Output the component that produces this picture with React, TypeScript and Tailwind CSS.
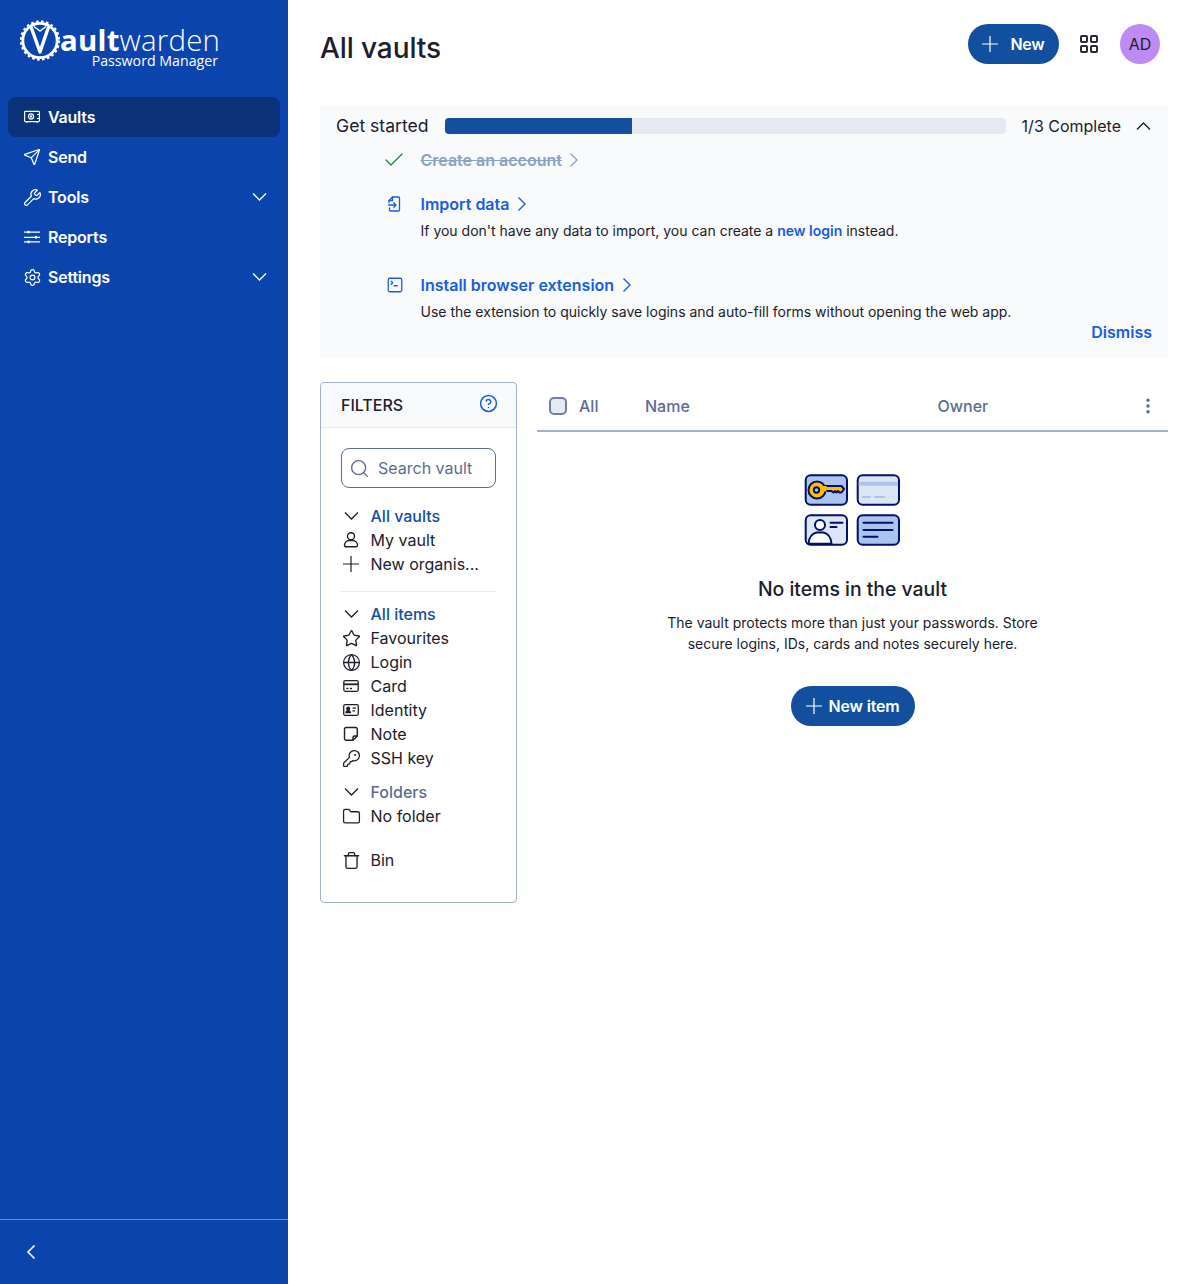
import React from 'react';
import {
  Check,
  CircleHelp,
  EllipsisVertical,
  Folder,
  Globe,
  KeyRound,
  Search,
  Send,
  Settings,
  SquareTerminal,
  Star,
  Trash,
  Wrench,
} from 'lucide-react';

const VaultIcon = () => (
  <svg width="16" height="16" viewBox="0 0 16 16" fill="none" stroke="white" strokeWidth="1.2">
    <rect x="0.6" y="2.4" width="14.8" height="10.2" rx="0.8" />
    <path d="M3 12.6v1.4M13 12.6v1.4M13 5.500h2.500M13 9.500h2.500" />
    <circle cx="7" cy="7.500" r="2.600" />
    <circle cx="7" cy="7.500" r="0.7" fill="white" />
  </svg>
);

const SlidersIcon = () => (
  <svg width="16" height="16" viewBox="0 0 16 16" fill="none" stroke="white" strokeWidth="1.3">
    <path d="M0 3.200h16M0 8.300h16M0 12.900h16" />
    <circle cx="4.500" cy="3.200" r="1.400" fill="white" stroke="none" />
    <circle cx="12" cy="8.300" r="1.400" fill="white" stroke="none" />
    <circle cx="4.500" cy="12.900" r="1.400" fill="white" stroke="none" />
  </svg>
);

const ImportIcon = () => (
  <svg width="16" height="16" viewBox="0 0 16 16" fill="none" stroke="currentColor" strokeWidth="1.3" strokeLinejoin="round" strokeLinecap="round">
    <path d="M3 6.500V4.500L6.500 1h6a1 1 0 0 1 1 1v12a1 1 0 0 1-1 1h-8a1 1 0 0 1-1-1v-2" />
    <path d="M6.500 1v3.500H3" />
    <path d="M2.500 9H10M7.800 6.800 10 9l-2.200 2.200" />
  </svg>
);

const UserIcon = () => (
  <svg width="16" height="16" viewBox="0 0 16 16" fill="none" stroke="currentColor" strokeWidth="1.4">
    <circle cx="8" cy="4.300" r="3.500" />
    <path d="M1.500 13.200c0-2.600 2.200-4.700 4.500-4.700h4c2.300 0 4.500 2.100 4.500 4.700 0 1.100-.6 1.600-1.500 1.600H3c-.9 0-1.500-.5-1.500-1.600z" />
  </svg>
);

const CardIcon = () => (
  <svg width="16" height="16" viewBox="0 0 16 16" fill="none" stroke="currentColor" strokeWidth="1.3">
    <rect x="0.8" y="2.700" width="14.400" height="10.600" rx="1.500" />
    <path d="M1 6.300h14" strokeWidth="1.800" />
    <path d="M3.500 10.500h2M7 10.500h2" />
  </svg>
);

const IdentityIcon = () => (
  <svg width="16" height="16" viewBox="0 0 16 16" fill="none" stroke="currentColor" strokeWidth="1.3">
    <rect x="0.7" y="2.700" width="14.600" height="10.600" rx="1.500" />
    <circle cx="5.200" cy="6.600" r="1.400" fill="currentColor" />
    <path d="M3 10.600c.2-2.600 4.200-2.600 4.400 0z" fill="currentColor" />
    <path d="M9.500 6.200h3.500M9.500 8.800h2.500" />
  </svg>
);

const NoteIcon = () => (
  <svg width="16" height="16" viewBox="0 0 16 16" fill="none" stroke="currentColor" strokeWidth="1.4" strokeLinejoin="round">
    <path d="M10 14.300H3a1.500 1.500 0 0 1-1.500-1.500V3A1.500 1.500 0 0 1 3 1.500h9.800A1.500 1.500 0 0 1 14.300 3v7z" />
    <path d="M14.300 10h-2.800A1.500 1.500 0 0 0 10 11.500v2.800" />
  </svg>
);

const AppsIcon = () => (
  <svg width="18" height="18" viewBox="0 0 18 18" fill="none" stroke="#272b33" strokeWidth="2">
    <rect x="1" y="1" width="6" height="6" rx="1" />
    <rect x="11" y="1" width="6" height="6" rx="1" />
    <rect x="1" y="11" width="6" height="6" rx="1" />
    <rect x="11" y="11" width="6" height="6" rx="1" />
  </svg>
);

const PlusIcon = ({ size }: { size: number }) => (
  <svg width={size} height={size} viewBox="0 0 16 16" fill="none" stroke="currentColor" strokeWidth="1.200" className="shrink-0">
    <path d="M8 0v16M0 8h16" />
  </svg>
);

const ChevronDownIcon = ({ className }: { className?: string }) => (
  <svg width="17" height="10" viewBox="0 0 17 10" fill="none" stroke="currentColor" strokeWidth="1.300" className={className}>
    <path d="M2 1.500 8.500 8 15 1.500" />
  </svg>
);

const ChevronUpIcon = () => (
  <svg width="17" height="10" viewBox="0 0 17 10" fill="none" stroke="currentColor" strokeWidth="1.400">
    <path d="M2 8.500 8.500 2 15 8.500" />
  </svg>
);

const ChevronRightIcon = ({ className }: { className?: string }) => (
  <svg width="10" height="16" viewBox="0 0 10 16" fill="none" stroke="currentColor" strokeWidth="1.400" className={className}>
    <path d="M1.500 1.500 8 8l-6.500 6.500" />
  </svg>
);

const Logo = () => (
  <div className="flex h-[97px] pl-[20px] pt-[20px] text-white font-['Open_Sans',sans-serif]">
    <svg width="40" height="42" viewBox="0 0 40 42" fill="none" stroke="white" className="shrink-0">
      <circle cx="20" cy="20.500" r="17.200" strokeWidth="2.800" />
      <circle cx="20" cy="20.500" r="19" strokeWidth="2.400" strokeDasharray="2.600 2.400" />
      <path d="M10.500 5.500 20 32 29 5.500" strokeWidth="3.400" strokeLinejoin="round" />
      <path d="M14 6.500 20 11l6-4.500" strokeWidth="1.400" />
    </svg>
    <div className="w-[160px] shrink-0">
      <div className="mt-[6px] text-[29.400px] leading-[28px] tracking-[0.2px] whitespace-nowrap">
        <span className="inline-block font-bold">ault</span>
        <span className="inline-block font-light">warden</span>
      </div>
      <div className="pr-[2px] text-right text-[14.200px] leading-[14px] whitespace-nowrap">Password Manager</div>
    </div>
  </div>
);

const NavItem = ({ icon, label, active, chevron }: { icon: React.ReactNode; label: string; active?: boolean; chevron?: boolean }) => (
  <div className={`flex h-10 items-center rounded-lg pl-4 pr-[12px] ${active ? 'bg-[#0b3179]' : ''}`}>
    <span className="flex w-6 shrink-0">{icon}</span>
    <span className="flex-1 text-base font-semibold tracking-[-0.2px] text-white">{label}</span>
    {chevron && <ChevronDownIcon className="text-white" />}
  </div>
);

const FilterRow = ({ icon, label, heading, muted }: { icon: React.ReactNode; label: string; heading?: boolean; muted?: boolean }) => (
  <div className="flex h-6 items-center">
    <span className="ml-[2px] flex w-[27.500px] shrink-0 text-[#1b2029]">{icon}</span>
    <span className={`text-base ${muted ? 'font-medium text-[#5a6d91]' : heading ? 'font-medium text-[#12509f]' : 'text-[#1b2029]'}`}>{label}</span>
  </div>
);

const Illustration = () => (
  <svg width="98" height="74" viewBox="0 0 98 74" fill="none" stroke="#020f66" strokeWidth="2" strokeLinecap="round">
    <rect x="1.700" y="2.300" width="41.300" height="29.400" rx="5" fill="#aac3ef" />
    <rect x="53.700" y="2.300" width="41.300" height="29.400" rx="5" fill="#dbe5f6" />
    <path d="M54.700 10.700h39.300" stroke="#aac3ef" strokeWidth="4" strokeLinecap="butt" />
    <path d="M59 24h7M71 24h9" stroke="#aac3ef" />
    <rect x="1.700" y="42.300" width="41.300" height="29.400" rx="5" fill="#dbe5f6" />
    <path d="M4.500 70.700c.5-7 4.500-10.500 8-11.200h7c3.500.7 7.500 4.200 8 11.200z" fill="white" stroke="#020f66" />
    <circle cx="16" cy="52" r="5" fill="white" />
    <path d="M26.500 49.700h12M26.500 54h6" />
    <rect x="53.700" y="42.300" width="41.300" height="29.400" rx="5" fill="#aac3ef" />
    <path d="M59.500 49.700h29M59.500 57h29M59.500 63.700h14" />
    <path
      d="M18 13h19.500l2.500 3-2.500 3.500h-2l-1.500-1.500-1.500 1.500-1.500-1.500-1.500 1.500-2-1.500H18z"
      fill="#ffbf00"
      strokeLinejoin="round"
    />
    <circle cx="13" cy="17" r="8.500" fill="#ffbf00" />
    <path d="M19 13h3.500v5.500H19z" fill="#ffbf00" stroke="none" />
    <circle cx="12.500" cy="17" r="2.700" fill="#aac3ef" />
  </svg>
);

const NewButton = ({ label, className }: { label: string; className: string }) => (
  <button className={`flex h-10 items-center justify-center rounded-full bg-[#12509f] text-base font-semibold tracking-[-0.2px] text-white ${className}`}>
    <PlusIcon size={16} />
    {label}
  </button>
);

export default function App() {
  return (
    <div className="flex h-[1284px] w-full bg-white font-['Inter',sans-serif] text-[#1b2029]">
      <aside className="flex w-72 shrink-0 flex-col bg-[#0c44ae]">
        <Logo />
        <nav className="flex-1 px-2">
          <NavItem icon={<VaultIcon />} label="Vaults" active />
          <NavItem icon={<Send size={18} strokeWidth={1.600} className="-ml-[1px] text-white" />} label="Send" />
          <NavItem icon={<Wrench size={19} strokeWidth={1.600} className="-ml-[1.500px] text-white" />} label="Tools" chevron />
          <NavItem icon={<SlidersIcon />} label="Reports" />
          <NavItem icon={<Settings size={19} strokeWidth={1.600} className="-ml-[1.500px] text-white" />} label="Settings" chevron />
        </nav>
        <div className="flex h-[65px] items-center border-t border-[#6d8fd0] pl-[26px]">
          <svg width="10" height="16" viewBox="0 0 10 16" fill="none" stroke="white" strokeWidth="1.600">
            <path d="M8.500 1.500 2 8l6.500 6.500" />
          </svg>
        </div>
      </aside>

      <main className="min-w-0 flex-1 pl-8 pr-8">
        <header className="flex h-[105px] items-start justify-between">
          <h1 className="mt-[29px] text-[28px] leading-[38px] font-medium tracking-[-0.1px]">All vaults</h1>
          <div className="mt-6 flex items-center mr-[8px]">
            <NewButton label="New" className="w-[91px] gap-[12px]" />
            <span className="ml-[21px] flex w-[18px]"><AppsIcon /></span>
            <span className="ml-[22px] flex h-10 w-10 items-center justify-center rounded-full bg-[#bd8bf3] text-base text-[#1b2029]">AD</span>
          </div>
        </header>

        <section className="h-[253px] bg-[#f9fafc] px-4">
          <div className="flex h-[42px] items-center">
            <span className="text-[17.600px] leading-6">Get started</span>
            <div className="ml-4 h-4 w-[561px] overflow-hidden rounded bg-[#e6e9f2]">
              <div className="h-full w-1/3 bg-[#12509f]" />
            </div>
            <span className="ml-4 flex-1 text-base">1/3 Complete</span>
            <ChevronUpIcon />
          </div>

          <div className="mt-[1px] flex h-6 items-center">
            <span className="flex w-[84.500px] pl-[46px]"><Check size={24} strokeWidth={1.200} className="text-[#0f8a24]" /></span>
            <span className="text-base font-semibold text-[#8aa3c4] line-through">Create an account</span>
            <ChevronRightIcon className="ml-[7px] text-[#8aa3c4]" />
          </div>

          <div className="mt-5 flex h-6 items-center">
            <span className="flex w-[84.500px] pl-[50px] text-[#175ddc]"><ImportIcon /></span>
            <span className="text-base font-semibold text-[#175ddc]">Import data</span>
            <ChevronRightIcon className="ml-[8px] text-[#175ddc]" />
          </div>
          <p className="mt-[5px] ml-[84.500px] text-sm leading-5">
            If you don't have any data to import, you can create a <span className="font-semibold text-[#175ddc]">new login</span> instead.
          </p>

          <div className="mt-[32px] flex h-6 items-center">
            <span className="flex w-[84.500px] pl-[50px] text-[#175ddc]"><SquareTerminal size={18} strokeWidth={1.700} /></span>
            <span className="text-base font-semibold text-[#175ddc]">Install browser extension</span>
            <ChevronRightIcon className="ml-[8px] text-[#175ddc]" />
          </div>
          <p className="mt-[5px] ml-[84.500px] text-sm leading-5">
            Use the extension to quickly save logins and auto-fill forms without opening the web app.
          </p>
          <div className="-mt-[2px] text-right text-base font-semibold text-[#175ddc]">Dismiss</div>
        </section>

        <div className="mt-6 flex items-start gap-5">
          <div className="h-[521px] w-[197px] shrink-0 rounded border border-[#a4b0c9]">
            <div className="flex h-[45px] items-center justify-between rounded-t border-b border-[#e6e9f2] bg-[#f9fafc] pl-5 pr-[18px]">
              <span className="text-base font-medium">FILTERS</span>
              <CircleHelp size={19} strokeWidth={1.900} className="-mt-1 text-[#175ddc]" />
            </div>
            <div className="px-5 pt-5">
              <div className="flex h-10 items-center rounded-lg border border-[#5a6d91] pl-[7px]">
                <Search size={21} strokeWidth={1.500} className="text-[#5a6d91]" />
                <span className="ml-[8px] text-base text-[#5a6d91]">Search vault</span>
              </div>

              <div className="mt-4 border-b border-[#e6e9f2] pb-[15px]">
                <FilterRow icon={<ChevronDownIcon />} label="All vaults" heading />
                <FilterRow icon={<UserIcon />} label="My vault" />
                <FilterRow icon={<PlusIcon size={16} />} label="New organis..." />
              </div>

              <div className="mt-[10px]">
                <FilterRow icon={<ChevronDownIcon />} label="All items" heading />
                <FilterRow icon={<Star size={19} strokeWidth={1.700} className="-ml-[1.500px]" />} label="Favourites" />
                <FilterRow icon={<Globe size={19} strokeWidth={1.600} className="-ml-[1.500px]" />} label="Login" />
                <FilterRow icon={<CardIcon />} label="Card" />
                <FilterRow icon={<IdentityIcon />} label="Identity" />
                <FilterRow icon={<NoteIcon />} label="Note" />
                <FilterRow icon={<KeyRound size={19} strokeWidth={1.600} className="-ml-[1.500px]" />} label="SSH key" />
              </div>

              <div className="mt-[10px]">
                <FilterRow icon={<ChevronDownIcon />} label="Folders" muted />
                <FilterRow icon={<Folder size={19} strokeWidth={1.600} className="-ml-[1.500px]" />} label="No folder" />
              </div>

              <div className="mt-5">
                <FilterRow icon={<Trash size={19} strokeWidth={1.700} className="-ml-[1.500px]" />} label="Bin" />
              </div>
            </div>
          </div>

          <div className="min-w-0 flex-1">
            <div className="flex h-[50px] items-center border-b-2 border-[#a4b0c9] text-base font-medium text-[#5a6d91]">
              <span className="ml-3 h-[18px] w-[18px] rounded-[5px] border-2 border-[#6f80a3] bg-[#e6e9f2]" />
              <span className="ml-3 w-[66px]">All</span>
              <span className="w-[292.500px]">Name</span>
              <span className="flex-1">Owner</span>
              <EllipsisVertical size={20} strokeWidth={2.200} className="mr-[10px]" />
            </div>
            <div className="flex flex-col items-center pt-[41px]">
              <Illustration />
              <h2 className="mt-[28px] text-[19.400px] leading-7 font-medium">No items in the vault</h2>
              <p className="mt-[9px] w-[400px] text-center text-sm leading-[21px]">
                The vault protects more than just your passwords. Store secure logins, IDs, cards and notes securely here.
              </p>
              <div className="mt-[32px]">
                <NewButton label="New item" className="w-[124px] gap-[7px]" />
              </div>
            </div>
          </div>
        </div>
      </main>
    </div>
  );
}
